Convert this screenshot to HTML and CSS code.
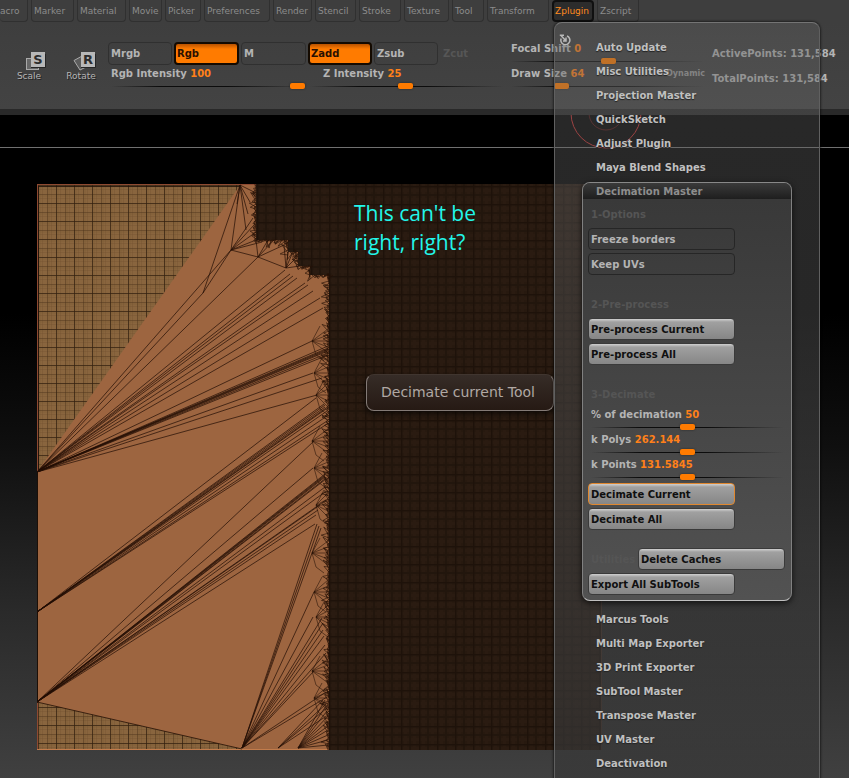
FILE: index.html
```html
<!DOCTYPE html>
<html lang="en">
<head>
    <meta charset="UTF-8">
    <meta name="viewport" content="width=device-width, initial-scale=1.0">
    <title>Zplugin - Decimation Master</title>
    <link rel="stylesheet" href="styles.css">
</head>
<body>
    <div class="app">
        <nav class="menubar">
            <button class="tab">acro</button>
            <button class="tab">Marker</button>
            <button class="tab">Material</button>
            <button class="tab">Movie</button>
            <button class="tab">Picker</button>
            <button class="tab">Preferences</button>
            <button class="tab">Render</button>
            <button class="tab">Stencil</button>
            <button class="tab">Stroke</button>
            <button class="tab">Texture</button>
            <button class="tab">Tool</button>
            <button class="tab">Transform</button>
            <button class="tab active">Zplugin</button>
            <button class="tab">Zscript</button>
        </nav>

        <header class="shelf">
            <div class="modes">
                <button class="mode">
                    <svg width="36" height="22" viewBox="0 0 36 22">
                        <rect x="15.500" y="9.500" width="12" height="11" fill="#686868" stroke="#aaa"/>
                        <path d="M20 18.500h14.500V5" fill="none" stroke="#262626"/>
                        <rect x="20" y="3" width="14" height="15" fill="#b8b8b8"/>
                        <text x="27" y="15" class="icon-letter">S</text>
                    </svg>
                    <span>Scale</span>
                </button>
                <button class="mode">
                    <svg width="36" height="22" viewBox="0 0 36 22">
                        <path d="M11 11.500l9-5 6 10-9 4.500z" fill="#5c5c5c" stroke="#aaa"/>
                        <path d="M18 18.500h14.500V5" fill="none" stroke="#262626"/>
                        <rect x="18" y="3" width="14" height="15" fill="#b8b8b8"/>
                        <text x="25" y="15" class="icon-letter">R</text>
                    </svg>
                    <span>Rotate</span>
                </button>
            </div>

            <div class="draw">
                <div class="keys">
                    <button class="key">Mrgb</button>
                    <button class="key on">Rgb</button>
                    <button class="key">M</button>
                    <button class="key on">Zadd</button>
                    <button class="key">Zsub</button>
                    <button class="key off" disabled>Zcut</button>
                </div>
                <div class="row">
                    <div class="slider">
                        <label for="rgb">Rgb Intensity <b>100</b></label>
                        <input type="range" id="rgb" min="0" max="100" value="100">
                    </div>
                    <div class="slider indent">
                        <label for="zint">Z Intensity <b>25</b></label>
                        <input type="range" id="zint" min="0" max="51" value="25">
                    </div>
                </div>
            </div>

            <div class="brush">
                <div class="slider">
                    <label for="focal">Focal Shift <b>0</b></label>
                    <input type="range" id="focal" min="-100" max="100" value="0">
                </div>
                <div class="slider">
                    <label for="size">Draw Size <b>64</b><span class="dynamic">Dynamic</span></label>
                    <input type="range" id="size" min="0" max="264" value="64">
                </div>
            </div>

            <div class="stats">
                <p>ActivePoints: 131,584</p>
                <p>TotalPoints: 131,584</p>
            </div>
        </header>

        <main class="viewport">
            <svg class="cursor" width="76" height="38" viewBox="0 0 76 38" fill="none" stroke="#c02c2c">
                <circle cx="37" cy="-2" r="35"/>
                <circle cx="37" cy="-2" r="17" opacity="0.4"/>
            </svg>
            <svg class="mesh" width="565" height="566" viewBox="37 184 565 566">
                <defs>
                    <pattern id="fine" x="38" y="185" width="18" height="18" patternUnits="userSpaceOnUse">
                        <rect width="18" height="18" fill="#89653e"/>
                        <path d="M4.500 0v18M13.500 0v18M0 4.500h18M0 13.500h18M2 0v18M11 0v18M0 2h18M0 11h18" stroke="#6f4c2b" stroke-opacity="0.35" stroke-width="0.8"/>
                        <path d="M9.500 0v18M0 9.500h18" stroke="#4a3018" stroke-opacity="0.45"/>
                        <path d="M0.500 0v18M0 0.500h18" stroke="#32200f" stroke-opacity="0.75"/>
                    </pattern>
                    <pattern id="dense" x="329" y="186" width="18" height="18" patternUnits="userSpaceOnUse">
                        <rect width="18" height="18" fill="#27190f"/>
                        <path d="M4.500 0v18M13.500 0v18M0 4.500h18M0 13.500h18" stroke="#2a1b11" stroke-width="3"/>
                        <path d="M9 0v18M0 9h18" stroke="#22160d" stroke-width="2"/>
                        <path d="M0.500 0v18M0 0.500h18" stroke="#1e120a" stroke-width="2"/>
                    </pattern>
                </defs>
                <rect x="37" y="184" width="565" height="566" fill="#9d6540"/>
                <path d="M37 184H241L37 472z" fill="url(#fine)"/>
                <path d="M37 702L242 749L37 750z" fill="url(#fine)"/>
                <path d="M256 184H602V750H329V275H310V266H298V252H288V240H256z" fill="url(#dense)"/>
                <path d="M37.500 184V750M37 184.500H256" stroke="#8e4a32"/>
                <path d="M38.500 186V472M38 186.500H240" stroke="#1c0f07" stroke-opacity="0.8"/>
                <path d="M37.500 472V702" stroke="#1c0f07"/>
                <path d="M37 749.500H329" stroke="#c27c4c"/>
                <path d="M601.500 184V750" stroke="#50372b"/>
                <g id="wires" fill="none" stroke="#241005"></g>
            </svg>
            <p class="note">This can't be<br>right, right?</p>
            <div class="tooltip" role="tooltip">Decimate current Tool</div>
        </main>

        <section class="popup">
            <svg class="dock" width="12" height="12" viewBox="0 0 12 12" fill="none" stroke="#b8b8b8" stroke-width="1.500">
                <path d="M2.200 4.500A4.500 4.500 0 1 0 8 2"/>
                <path d="M0.800 1.200H5M1.500 1L7 7M7 3.500V7H4"/>
            </svg>
            <a class="item" href="#">Auto Update</a>
            <a class="item" href="#">Misc Utilities</a>
            <a class="item" href="#">Projection Master</a>
            <a class="item" href="#">QuickSketch</a>
            <a class="item" href="#">Adjust Plugin</a>
            <a class="item" href="#">Maya Blend Shapes</a>

            <div class="panel">
                <h2>Decimation Master</h2>
                <div class="group">
                    <h3>1-Options</h3>
                    <button class="wide toggle">Freeze borders</button>
                    <button class="wide toggle">Keep UVs</button>
                </div>
                <div class="group">
                    <h3>2-Pre-process</h3>
                    <button class="wide">Pre-process Current</button>
                    <button class="wide">Pre-process All</button>
                </div>
                <div class="group">
                    <h3>3-Decimate</h3>
                    <div class="slider">
                        <label for="percent">% of decimation <b>50</b></label>
                        <input type="range" id="percent" min="0" max="100" value="50">
                    </div>
                    <div class="slider">
                        <label for="polys">k Polys <b>262.144</b></label>
                        <input type="range" id="polys" min="0" max="100" value="50">
                    </div>
                    <div class="slider">
                        <label for="points">k Points <b>131.5845</b></label>
                        <input type="range" id="points" min="0" max="100" value="50">
                    </div>
                    <button class="wide focus">Decimate Current</button>
                    <button class="wide">Decimate All</button>
                </div>
                <div class="group">
                    <div class="utilities">
                        <h3>Utilities</h3>
                        <button class="wide">Delete Caches</button>
                    </div>
                    <button class="wide">Export All SubTools</button>
                </div>
            </div>

            <a class="item" href="#">Marcus Tools</a>
            <a class="item" href="#">Multi Map Exporter</a>
            <a class="item" href="#">3D Print Exporter</a>
            <a class="item" href="#">SubTool Master</a>
            <a class="item" href="#">Transpose Master</a>
            <a class="item" href="#">UV Master</a>
            <a class="item" href="#">Deactivation</a>
        </section>
    </div>

    <script src="mesh.js"></script>
</body>
</html>
```
FILE: styles.css
```css
* {
    box-sizing: border-box;
}
body {
    margin: 0;
    background-color: #000;
    color: #b4b4b4;
    font-family: "DejaVu Sans", sans-serif;
    font-size: 10px;
    font-weight: bold;
}
button {
    font: inherit;
    color: inherit;
    text-align: left;
    border: none;
    background: none;
    padding: 0;
}
p, h2, h3 {
    margin: 0;
    font-size: 10px;
}
.app {
    position: relative;
    display: flex;
    flex-direction: column;
    height: 100vh;
    overflow: hidden;
}

/* menu tabs */
.menubar {
    display: grid;
    grid-template-columns: 28px 43px 49px 33px 36px 66px 39px 41px 42px 45px 32px 62px 42px 42px;
    gap: 3px;
    height: 22px;
    background-color: #3e3e3e;
}
.tab {
    font-size: 9px;
    font-weight: normal;
    color: #8c8c8c;
    padding-left: 2px;
    border: 1px solid #303030;
    border-top: none;
    border-radius: 0 0 4px 4px;
    white-space: nowrap;
}
.tab:first-child {
    padding-left: 0;
    border-left: none;
}
.tab.active {
    color: #ff8a1e;
    background-color: #2c2c2c;
    border: 2px solid #101010;
    border-radius: 4px;
    padding-left: 1px;
}

/* shelf */
.shelf {
    display: flex;
    height: 93px;
    flex-shrink: 0;
    background: linear-gradient(#3e3e3e, #434343);
    border-bottom: 6px solid #292929;
    white-space: nowrap;
}
.modes {
    display: flex;
    gap: 2px;
    width: 108px;
    padding: 27px 0 0 4px;
}
.mode {
    display: flex;
    flex-direction: column;
    align-items: center;
    width: 50px;
    height: 36px;
    font-size: 9px;
    font-weight: normal;
    text-shadow: 1px 1px #222;
}
.icon-letter {
    font: bold 13px "DejaVu Sans", sans-serif;
    fill: #2c2c2c;
    text-anchor: middle;
    text-shadow: none;
}
.draw {
    width: 400px;
    padding-top: 20px;
}
.keys {
    display: grid;
    grid-template-columns: 64px 65px 65px 64px 64px 64px;
    gap: 2px;
}
.row {
    display: flex;
    gap: 2px;
}
.key {
    height: 23px;
    padding-left: 2px;
    border: 1px solid #303030;
    border-radius: 4px;
}
.key.on {
    color: #2a1000;
    background: linear-gradient(#b85200, #ff7b00 5px);
    border: 2px solid #140a00;
    padding-left: 1px;
}
.key.off {
    color: #565656;
    border-color: transparent;
}
.slider {
    width: 197px;
    height: 25px;
    padding-left: 3px;
}
.slider label {
    display: block;
    height: 16px;
    line-height: 17px;
}
.slider b {
    color: #ff8019;
}
.slider.indent label {
    padding-left: 13px;
}
.slider input {
    display: block;
    appearance: none;
    width: 100%;
    height: 6px;
    margin: 2px 0 0;
    background: linear-gradient(90deg, transparent, #0c0c0c 25%, #0c0c0c 60%, transparent) center / 100% 1px no-repeat;
}
.slider input::-webkit-slider-thumb {
    appearance: none;
    width: 15px;
    height: 6px;
    background-color: #ff7b00;
    border-radius: 2px;
    box-shadow: 0 0 2px #222;
}
.brush {
    width: 204px;
    padding-top: 18px;
}
.dynamic {
    float: right;
    font-size: 8px;
    color: #999;
}
.stats p {
    line-height: 25px;
}
.stats {
    padding-top: 19px;
}

/* 3D view */
.viewport {
    position: relative;
    flex: 1;
    padding: 69px 0 0 37px;
    background:
        linear-gradient(#707070, #707070) 0 32px / 100% 1px no-repeat,
        linear-gradient(#000 30%, #0f0f0f 50%, #2a2a2a 75%, #404040);
}
.mesh {
    display: block;
}
.cursor {
    position: absolute;
    left: 569px;
    top: 0;
}
.note {
    position: absolute;
    left: 354px;
    top: 84px;
    font: 21px/29px "Open Sans", sans-serif;
    color: #22f6ea;
}
.tooltip {
    position: absolute;
    left: 366px;
    top: 259px;
    padding: 0 18px 0 14px;
    font-size: 14px;
    font-weight: normal;
    line-height: 35px;
    white-space: nowrap;
    color: #b0a8a4;
    background: linear-gradient(#362c27, #261a14);
    border: 1px solid #837a76;
    border-top-color: #40352f;
    border-radius: 8px;
    box-shadow: 0 3px 6px rgba(0, 0, 0, 0.6);
}

/* plugin menu */
.popup {
    position: absolute;
    left: 554px;
    top: 22px;
    width: 266px;
    min-height: 100%;
    padding: 12px 28px;
    background: linear-gradient(rgba(95, 95, 95, 0.4), rgba(100, 100, 100, 0.4) 100px, rgba(78, 78, 78, 0.5) 260px, rgba(54, 54, 54, 0.7));
    border: 1px solid #606060;
    border-top-color: #747474;
    border-radius: 8px 8px 0 0;
    box-shadow: 0 0 3px #000;
}
.dock {
    position: absolute;
    left: 4px;
    top: 11px;
}
.item {
    display: block;
    height: 24px;
    line-height: 25px;
    padding-left: 13px;
    color: #c0c0c0;
    text-decoration: none;
    text-shadow: 0 1px 1px #222;
}
.panel {
    width: 210px;
    margin: 3px -1px 6px;
    padding: 0 5px 3px;
    background: linear-gradient(#383838, #3b3b3b 50px, #525252);
    border: 1px solid #808080;
    border-top-color: #888;
    border-bottom-color: #c0c0c0;
    border-radius: 8px;
    box-shadow: 0 2px 6px rgba(0, 0, 0, 0.7);
}
.panel h2 {
    height: 16px;
    line-height: 17px;
    margin: 0 -5px 3px;
    padding-left: 13px;
    color: #8e8e8e;
    background: linear-gradient(#3a3a3a, #1e1e1e);
    border-radius: 7px 7px 0 0;
}
.panel h3 {
    height: 25px;
    line-height: 25px;
    padding-left: 3px;
    color: #555;
}
.panel .slider {
    width: 196px;
}
.panel .slider label {
    height: 15px;
    line-height: 15px;
}
.group {
    display: flow-root;
    padding-bottom: 15px;
}
.group:last-child {
    padding-bottom: 0;
}
.wide {
    display: block;
    width: 147px;
    height: 22px;
    margin: 1px 0 2px;
    padding-left: 2px;
    color: #101010;
    background: linear-gradient(#d0d0d0, #a0a0a0 3px, #868686);
    border: 1px solid #3a3a3a;
    border-radius: 4px;
}
.wide + .wide {
    margin-top: 3px;
}
.wide.toggle {
    color: #b4b4b4;
    background: none;
    border-color: #262626;
}
.wide.focus {
    border-color: #e08830;
}
.utilities {
    display: flex;
}
.utilities h3 {
    width: 50px;
}
```
FILE: mesh.js
```js
// long fans that run from one vertex to the border of the dense area
const fans = [
    [37, 472, [[203,293],[231,250],[258,257],[285,270],[290,274],[293,276],[297,278],[305,283],[308,285],[313,291],[320,298],[323,308],[312,341],[328,346],[328,348],[328,349],[328,350],[328,351],[328,353],[328,355],[313,373],[322,378],[317,395]]],
    [37, 612, [[316,398],[324,404],[325,405],[325,407],[326,408],[326,409],[327,411],[327,416],[327,421],[327,424]]],
    [37, 702, [[314,441],[313,468],[325,474],[325,475],[325,476],[325,477],[326,478],[326,479],[325,487],[325,492],[326,500],[320,505],[318,510],[316,515],[315,524]]],
    [242, 748, [[317,524],[319,526],[321,528],[314,592],[313,617],[322,618],[323,623],[323,630],[324,636],[325,645],[326,653],[314,671],[326,692],[327,697]]],
    [278, 748, [[323,700],[326,704],[327,708],[328,715]]],
    [298, 748, [[325,700],[326,706],[327,711],[328,716],[328,721],[328,726],[328,730],[328,735],[328,740],[328,745]]],
    [240, 185, [[203,293],[231,250],[246,230],[256,193],[250,202],[248,214],[237,204]]],
    [231, 250, [[203,293],[253,218],[254,225],[256,232],[256,240],[258,257],[262,242]]],
    [258, 257, [[256,240],[268,240],[274,240],[284,245],[286,268]]],
    [286, 268, [[284,245],[288,252],[292,254],[296,258],[300,266]]]
];

// border of the dense area, and the vertices that stand out from it
const border = [[256,186],[256,240],[288,240],[288,252],[298,252],[298,266],[310,266],[310,275],[329,275],[329,748]];
const knots = [341, 373, 395, 441, 468, 505, 553, 592, 617, 671, 698];

const wires = document.getElementById('wires');
let seed = 7;

function random() {
    seed = (seed * 16807) % 2147483647;
    return seed / 2147483647;
}

function addPath(d, opacity, width) {
    const path = document.createElementNS('http://www.w3.org/2000/svg', 'path');
    path.setAttribute('d', d);
    path.setAttribute('stroke-opacity', opacity);
    path.setAttribute('stroke-width', width);
    wires.appendChild(path);
}

fans.forEach(([x, y, ends]) => {
    ends.forEach(([ex, ey]) => addPath(`M${x} ${y}L${ex} ${ey}`, 0.8, 0.9));
});

knots.forEach((y, i) => {
    const x = 312 + (i % 3) * 2;
    for (let k = -2; k <= 2; k++) {
        addPath(`M${x} ${y}L328 ${y + k * 6}`, 0.8, 0.7);
    }
    addPath(`M${x} ${y}l4 14l8 6M${x} ${y}l8 -15`, 0.8, 0.7);
});

// small triangles along the border
for (let i = 1; i < border.length; i++) {
    const [x1, y1] = border[i - 1];
    const [x2, y2] = border[i];
    const length = Math.hypot(x2 - x1, y2 - y1);
    const dx = (x2 - x1) / length;
    const dy = (y2 - y1) / length;
    for (let t = 0; t < length; t += 2) {
        const x = x1 + dx * t;
        const y = y1 + dy * t;
        const depth = 1 + random() * random() * 9;
        const slide = random() * 8 - 4;
        const px = x - dy * depth + dx * slide;
        const py = y + dx * depth + dy * slide;
        addPath(`M${x} ${y}L${px} ${py}L${x + dx * 5} ${y + dy * 5}`, 0.8, 0.8);
    }
}

addPath('M37 702L242 749', 0.8, 1);
```
